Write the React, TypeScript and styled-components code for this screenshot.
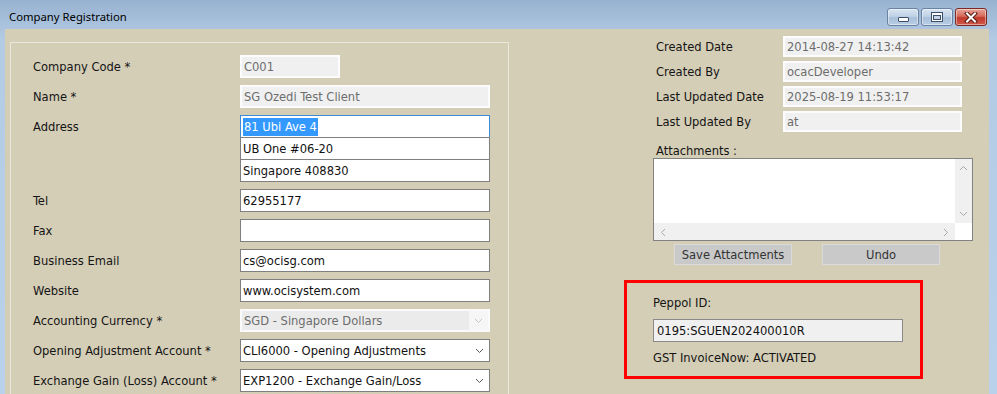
import React from 'react'
import styled, { createGlobalStyle } from 'styled-components'

const GlobalStyle = createGlobalStyle`
  html, body {
    margin: 0;
    padding: 0;
    background: #b9d1ea;
  }
  * { box-sizing: border-box; }
`

const FONT = `"DejaVu Sans Condensed", "DejaVu Sans", sans-serif`

const Window = styled.div`
  width: 997px;
  height: 394px;
  display: flex;
  flex-direction: column;
  overflow: hidden;
  background: linear-gradient(180deg, #97b2d0 0px, #b4cbe4 40px, #b9d1ea 100%);
  font-family: ${FONT};
  font-size: 12.8px;
  color: #111;
`

const TitleBar = styled.div`
  height: 29px;
  flex-shrink: 0;
  display: flex;
  align-items: flex-start;
  justify-content: space-between;
  padding: 0 10px 0 9px;
`

const TitleText = styled.div`
  font-family: "Noto Sans", "Liberation Sans", sans-serif;
  font-size: 11.3px;
  color: #000;
  padding-top: 9px;
`

const WinButtons = styled.div`
  display: flex;
  gap: 2px;
  padding-top: 8px;
`

const WinButton = styled.div<{ $close?: boolean }>`
  width: 32px;
  height: 18px;
  border-radius: 3px;
  border: 1px solid ${p => (p.$close ? '#7a2a22' : '#6b83a3')};
  background: ${p =>
    p.$close
      ? 'linear-gradient(180deg, #e8a59a 0%, #d56a5b 45%, #c0392b 55%, #d0594a 100%)'
      : 'linear-gradient(180deg, #d8e4f1 0%, #c0d2e6 45%, #a9c0da 55%, #b9cde3 100%)'};
  box-shadow: inset 0 0 0 1px rgba(255, 255, 255, 0.45);
  display: flex;
  align-items: center;
  justify-content: center;
`

const MinGlyph = styled.div`
  width: 11px;
  height: 5px;
  margin-top: 5px;
  border: 1px solid #3a4d69;
  border-radius: 1px;
  background: #fff;
`

const MaxGlyph = styled.div`
  width: 12px;
  height: 10px;
  border: 1px solid #3a4d69;
  background: #fff;
  display: flex;
  align-items: center;
  justify-content: center;
  &::after {
    content: '';
    width: 6px;
    height: 3px;
    margin-top: 1px;
    border: 1px solid #3a4d69;
    background: #c4d4e6;
  }
`

const Client = styled.div`
  flex: 1;
  margin: 0 8px 0 5px;
  background: #d4ceb7;
  display: flex;
  align-items: flex-start;
  min-height: 0;
`

const LeftGroup = styled.div`
  margin: 13px 0 0 5px;
  width: 499px;
  height: 400px;
  flex-shrink: 0;
  border: 1px solid #ebe7dd;
  padding: 12px 0 0 22px;
  display: grid;
  grid-template-columns: 207px 250px;
  row-gap: 7px;
  align-content: start;
`

const Label = styled.div`
  height: 23px;
  line-height: 23px;
  color: #141414;
  white-space: nowrap;
`

const Field = styled.div<{ $width?: number; $readOnly?: boolean; $focused?: boolean }>`
  width: ${p => (p.$width ? `${p.$width}px` : '100%')};
  height: 23px;
  display: flex;
  align-items: center;
  padding-left: 2px;
  background: ${p => (p.$readOnly ? '#f0f0f0' : '#ffffff')};
  border: ${p =>
    p.$focused ? '1px solid #3d8bd8' : p.$readOnly ? '2px solid #fcfcfc' : '1px solid #7f7f7f'};
  color: ${p => (p.$readOnly ? '#6d6d6d' : '#111')};
  white-space: nowrap;
  overflow: hidden;
`

const Selected = styled.span`
  background: #3399ff;
  color: #fff;
  padding: 1px 1px 2px 1px;
`

const AddressStack = styled.div`
  display: flex;
  flex-direction: column;
  & > * + * {
    margin-top: -1px;
  }
`

const Select = styled.div<{ $disabled?: boolean }>`
  height: 23px;
  display: flex;
  align-items: center;
  background: ${p => (p.$disabled ? '#f6f6f6' : '#ffffff')};
  border: ${p => (p.$disabled ? '2px solid #fafafa' : '1px solid #7f7f7f')};
  color: ${p => (p.$disabled ? '#6d6d6d' : '#111')};
  white-space: nowrap;
`

const SelectText = styled.div<{ $disabled?: boolean }>`
  flex: 1;
  height: 100%;
  display: flex;
  align-items: center;
  padding-left: 2px;
  background: ${p => (p.$disabled ? '#ebebeb' : 'transparent')};
`

const SelectArrow = styled.div`
  width: 19px;
  display: flex;
  align-items: center;
  justify-content: center;
`

const RightPanel = styled.div`
  margin-left: 115px;
  width: 350px;
  display: flex;
  flex-direction: column;
  align-items: flex-start;
`

const InfoGrid = styled.div`
  margin: 7px 0 0 32px;
  display: grid;
  grid-template-columns: 127px 179px;
  row-gap: 4px;
`

const InfoLabel = styled.div`
  height: 21px;
  line-height: 21px;
  color: #141414;
  white-space: nowrap;
`

const InfoField = styled.div`
  height: 21px;
  display: flex;
  align-items: center;
  padding-left: 2px;
  background: #f0f0f0;
  border: 2px solid #fcfcfc;
  color: #6d6d6d;
  white-space: nowrap;
`

const AttachLabel = styled.div`
  margin: 11px 0 0 32px;
  height: 15px;
  line-height: 15px;
  color: #141414;
`

const ListBox = styled.div`
  margin: 0 0 0 29px;
  width: 320px;
  height: 83px;
  border: 1px solid #828282;
  background: #fff;
  display: grid;
  grid-template-columns: 1fr 17px;
  grid-template-rows: 1fr 17px;
`

const ScrollV = styled.div`
  background: #f0f0f0;
  display: flex;
  flex-direction: column;
  justify-content: space-between;
  align-items: center;
  padding: 5px 0;
`

const ScrollH = styled.div`
  background: #f0f0f0;
  display: flex;
  justify-content: space-between;
  align-items: center;
  padding: 0 5px;
`

const ButtonRow = styled.div`
  margin: 3px 0 0 50px;
  display: flex;
  gap: 30px;
`

const FlatButton = styled.div`
  width: 118px;
  height: 21px;
  display: flex;
  align-items: center;
  justify-content: center;
  background: #c9c9c9;
  border: 1px solid #dadada;
  color: #333;
`

const PeppolBox = styled.div`
  margin-top: 15px;
  width: 299px;
  height: 99px;
  border: 3px solid #ff0000;
  padding: 12px 0 0 26px;
  display: flex;
  flex-direction: column;
`

const PeppolLabel = styled.div`
  height: 15px;
  line-height: 15px;
  color: #141414;
`

const PeppolField = styled.div`
  margin-top: 9px;
  width: 250px;
  height: 23px;
  display: flex;
  align-items: center;
  padding-left: 3px;
  background: #f0f0f0;
  border: 1px solid #8a8a8a;
  color: #111;
`

const StatusText = styled.div`
  margin-top: 8px;
  height: 15px;
  line-height: 15px;
  color: #141414;
`

type Dir = 'up' | 'down' | 'left' | 'right'

function Chevron({ dir, color }: { dir: Dir; color: string }) {
  const paths: Record<Dir, string> = {
    down: 'M1 2 L4.5 5.5 L8 2',
    up: 'M1 6 L4.5 2.5 L8 6',
    left: 'M6 1 L2.5 4.5 L6 8',
    right: 'M3 1 L6.5 4.5 L3 8',
  }
  return (
    <svg width="9" height="8" viewBox="0 0 9 8">
      <path d={paths[dir]} fill="none" stroke={color} strokeWidth="1" />
    </svg>
  )
}

function CloseGlyph() {
  return (
    <svg width="14" height="11" viewBox="0 0 14 11">
      <path d="M3 1.5 L11 9.5 M11 1.5 L3 9.5" stroke="#5a1a14" strokeWidth="4" strokeLinecap="square" />
      <path d="M3 1.5 L11 9.5 M11 1.5 L3 9.5" stroke="#ffffff" strokeWidth="2" strokeLinecap="square" />
    </svg>
  )
}

const formRows: { label: string; value: string; readOnly?: boolean; width?: number }[] = [
  { label: 'Company Code *', value: 'C001', readOnly: true, width: 100 },
  { label: 'Name *', value: 'SG Ozedi Test Client', readOnly: true },
]

const contactRows = [
  { label: 'Tel', value: '62955177' },
  { label: 'Fax', value: '' },
  { label: 'Business Email', value: 'cs@ocisg.com' },
  { label: 'Website', value: 'www.ocisystem.com' },
]

const selectRows = [
  { label: 'Accounting Currency *', value: 'SGD - Singapore Dollars', disabled: true },
  { label: 'Opening Adjustment Account *', value: 'CLI6000 - Opening Adjustments' },
  { label: 'Exchange Gain (Loss) Account *', value: 'EXP1200 - Exchange Gain/Loss' },
]

const infoRows = [
  { label: 'Created Date', value: '2014-08-27 14:13:42' },
  { label: 'Created By', value: 'ocacDeveloper' },
  { label: 'Last Updated Date', value: '2025-08-19 11:53:17' },
  { label: 'Last Updated By', value: 'at' },
]

export default function App() {
  return (
    <Window>
      <GlobalStyle />
      <TitleBar>
        <TitleText>Company Registration</TitleText>
        <WinButtons>
          <WinButton>
            <MinGlyph />
          </WinButton>
          <WinButton>
            <MaxGlyph />
          </WinButton>
          <WinButton $close>
            <CloseGlyph />
          </WinButton>
        </WinButtons>
      </TitleBar>
      <Client>
        <LeftGroup>
          {formRows.map(r => (
            <React.Fragment key={r.label}>
              <Label>{r.label}</Label>
              <Field $readOnly={r.readOnly} $width={r.width}>
                {r.value}
              </Field>
            </React.Fragment>
          ))}
          <Label>Address</Label>
          <AddressStack>
            <Field $focused>
              <Selected>81 Ubi Ave 4</Selected>
            </Field>
            <Field>UB One #06-20</Field>
            <Field>Singapore 408830</Field>
          </AddressStack>
          {contactRows.map(r => (
            <React.Fragment key={r.label}>
              <Label>{r.label}</Label>
              <Field>{r.value}</Field>
            </React.Fragment>
          ))}
          {selectRows.map(r => (
            <React.Fragment key={r.label}>
              <Label>{r.label}</Label>
              <Select $disabled={r.disabled}>
                <SelectText $disabled={r.disabled}>{r.value}</SelectText>
                <SelectArrow>
                  <Chevron dir="down" color={r.disabled ? '#c4c4c4' : '#555'} />
                </SelectArrow>
              </Select>
            </React.Fragment>
          ))}
        </LeftGroup>
        <RightPanel>
          <InfoGrid>
            {infoRows.map(r => (
              <React.Fragment key={r.label}>
                <InfoLabel>{r.label}</InfoLabel>
                <InfoField>{r.value}</InfoField>
              </React.Fragment>
            ))}
          </InfoGrid>
          <AttachLabel>Attachments :</AttachLabel>
          <ListBox>
            <div />
            <ScrollV>
              <Chevron dir="up" color="#a8a8a8" />
              <Chevron dir="down" color="#a8a8a8" />
            </ScrollV>
            <ScrollH>
              <Chevron dir="left" color="#a8a8a8" />
              <Chevron dir="right" color="#a8a8a8" />
            </ScrollH>
            <div />
          </ListBox>
          <ButtonRow>
            <FlatButton>Save Attactments</FlatButton>
            <FlatButton>Undo</FlatButton>
          </ButtonRow>
          <PeppolBox>
            <PeppolLabel>Peppol ID:</PeppolLabel>
            <PeppolField>0195:SGUEN202400010R</PeppolField>
            <StatusText>GST InvoiceNow: ACTIVATED</StatusText>
          </PeppolBox>
        </RightPanel>
      </Client>
    </Window>
  )
}
